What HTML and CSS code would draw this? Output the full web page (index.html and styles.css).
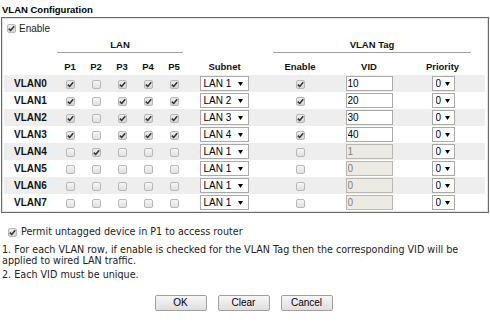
FILE: index.html
```html
<!DOCTYPE html>
<html>
<head>
<meta charset="utf-8">
<link rel="stylesheet" href="styles.css">
</head>
<body>
<div class="page">
  <div class="title">VLAN Configuration</div>
  <div class="box">
    <table class="grid">
      <colgroup>
        <col class="c-label"><col class="c-p"><col class="c-p"><col class="c-p"><col class="c-p"><col class="c-p">
        <col class="c-subnet"><col class="c-enable"><col class="c-vid"><col class="c-prio">
      </colgroup>
      <tr class="r-enable"><td colspan="10"><label class="en"><input type="checkbox" class="cb" checked><span>Enable</span></label></td></tr>
      <tr class="r-group">
        <th></th>
        <th colspan="5"><div class="grp grp-lan">LAN</div></th>
        <th></th>
        <th colspan="3"><div class="grp grp-tag">VLAN Tag</div></th>
      </tr>
      <tr class="r-head">
        <th></th><th>P1</th><th>P2</th><th>P3</th><th>P4</th><th>P5</th><th>Subnet</th><th>Enable</th><th>VID</th><th>Priority</th>
      </tr>
      <tr class="row alt">
        <th>VLAN0</th>
        <td><input type="checkbox" class="cb" checked></td><td><input type="checkbox" class="cb"></td><td><input type="checkbox" class="cb" checked></td><td><input type="checkbox" class="cb" checked></td><td><input type="checkbox" class="cb" checked></td>
        <td><select class="sel sub"><option>LAN 1</option></select></td>
        <td><input type="checkbox" class="cb" checked></td>
        <td><input type="text" class="vid" value="10"></td>
        <td><select class="sel pri"><option>0</option></select></td>
      </tr>
      <tr class="row">
        <th>VLAN1</th>
        <td><input type="checkbox" class="cb" checked></td><td><input type="checkbox" class="cb"></td><td><input type="checkbox" class="cb" checked></td><td><input type="checkbox" class="cb" checked></td><td><input type="checkbox" class="cb" checked></td>
        <td><select class="sel sub"><option>LAN 2</option></select></td>
        <td><input type="checkbox" class="cb" checked></td>
        <td><input type="text" class="vid" value="20"></td>
        <td><select class="sel pri"><option>0</option></select></td>
      </tr>
      <tr class="row alt">
        <th>VLAN2</th>
        <td><input type="checkbox" class="cb" checked></td><td><input type="checkbox" class="cb"></td><td><input type="checkbox" class="cb" checked></td><td><input type="checkbox" class="cb" checked></td><td><input type="checkbox" class="cb" checked></td>
        <td><select class="sel sub"><option>LAN 3</option></select></td>
        <td><input type="checkbox" class="cb" checked></td>
        <td><input type="text" class="vid" value="30"></td>
        <td><select class="sel pri"><option>0</option></select></td>
      </tr>
      <tr class="row">
        <th>VLAN3</th>
        <td><input type="checkbox" class="cb" checked></td><td><input type="checkbox" class="cb"></td><td><input type="checkbox" class="cb" checked></td><td><input type="checkbox" class="cb" checked></td><td><input type="checkbox" class="cb" checked></td>
        <td><select class="sel sub"><option>LAN 4</option></select></td>
        <td><input type="checkbox" class="cb" checked></td>
        <td><input type="text" class="vid" value="40"></td>
        <td><select class="sel pri"><option>0</option></select></td>
      </tr>
      <tr class="row alt">
        <th>VLAN4</th>
        <td><input type="checkbox" class="cb"></td><td><input type="checkbox" class="cb" checked></td><td><input type="checkbox" class="cb"></td><td><input type="checkbox" class="cb"></td><td><input type="checkbox" class="cb"></td>
        <td><select class="sel sub"><option>LAN 1</option></select></td>
        <td><input type="checkbox" class="cb"></td>
        <td><input type="text" class="vid" value="1" disabled></td>
        <td><select class="sel pri"><option>0</option></select></td>
      </tr>
      <tr class="row">
        <th>VLAN5</th>
        <td><input type="checkbox" class="cb"></td><td><input type="checkbox" class="cb"></td><td><input type="checkbox" class="cb"></td><td><input type="checkbox" class="cb"></td><td><input type="checkbox" class="cb"></td>
        <td><select class="sel sub"><option>LAN 1</option></select></td>
        <td><input type="checkbox" class="cb"></td>
        <td><input type="text" class="vid" value="0" disabled></td>
        <td><select class="sel pri"><option>0</option></select></td>
      </tr>
      <tr class="row alt">
        <th>VLAN6</th>
        <td><input type="checkbox" class="cb"></td><td><input type="checkbox" class="cb"></td><td><input type="checkbox" class="cb"></td><td><input type="checkbox" class="cb"></td><td><input type="checkbox" class="cb"></td>
        <td><select class="sel sub"><option>LAN 1</option></select></td>
        <td><input type="checkbox" class="cb"></td>
        <td><input type="text" class="vid" value="0" disabled></td>
        <td><select class="sel pri"><option>0</option></select></td>
      </tr>
      <tr class="row">
        <th>VLAN7</th>
        <td><input type="checkbox" class="cb"></td><td><input type="checkbox" class="cb"></td><td><input type="checkbox" class="cb"></td><td><input type="checkbox" class="cb"></td><td><input type="checkbox" class="cb"></td>
        <td><select class="sel sub"><option>LAN 1</option></select></td>
        <td><input type="checkbox" class="cb"></td>
        <td><input type="text" class="vid" value="0" disabled></td>
        <td><select class="sel pri"><option>0</option></select></td>
      </tr>
    </table>
  </div>
  <div class="notes">
    <label class="permit"><input type="checkbox" class="cb" checked><span>Permit untagged device in P1 to access router</span></label>
    <p class="note">1. For each VLAN row, if enable is checked for the VLAN Tag then the corresponding VID will be applied to wired LAN traffic.</p>
    <p class="note">2. Each VID must be unique.</p>
  </div>
  <div class="buttons">
    <button class="btn">OK</button>
    <button class="btn">Clear</button>
    <button class="btn">Cancel</button>
  </div>
</div>
</body>
</html>
```

FILE: styles.css
```css
html, body {
  margin: 0;
  padding: 0;
  background: #fff;
}
body {
  font-family: "Liberation Sans", Arial, sans-serif;
  font-size: 10px;
  color: #000;
}
.page {
  width: 490px;
  padding-top: 3px;
}
.title {
  font-weight: bold;
  font-size: 9.5px;
  line-height: 13px;
  padding-left: 2px;
  height: 14px;
}
.box {
  margin-left: 1px;
  width: 484px;
  border: 1px solid #6a6a6a;
  box-shadow: inset 0 0 0 1px #e2e2e2;
  padding: 3px 0 1px 2px;
}
.grid {
  width: 481px;
  table-layout: fixed;
  border-collapse: collapse;
  border-spacing: 0;
}
.c-label { width: 53px; }
.c-p { width: 26px; }
.c-subnet { width: 75px; }
.c-enable { width: 76px; }
.c-vid { width: 62px; }
.c-prio { width: 85px; }
.grid td, .grid th {
  padding: 0;
  text-align: center;
  vertical-align: middle;
}
.grid th {
  font-weight: bold;
  font-size: 9.5px;
  color: #111;
}
.r-enable td {
  text-align: left;
  height: 16px;
}
.en {
  display: inline-flex;
  align-items: center;
  gap: 3px;
  padding-left: 3px;
  font-size: 10px;
  color: #222;
}
.r-group th {
  height: 21px;
  vertical-align: top;
}
.grp {
  border-bottom: 1px solid #a0a0a0;
  line-height: 12px;
  padding: 2px 0 1px;
}
.grp-lan { margin: 0 4px 0 0; }
.grp-tag { margin: 0 14px 0 11px; }
.r-head th { height: 17px; }
.row { height: 17px; }
.row.alt { background: #eeeeee; }
.row th { font-size: 10px; }

.cb {
  -webkit-appearance: none;
  appearance: none;
  width: 9px;
  height: 9px;
  margin: 0;
  border: 1px solid #b8b8b8;
  border-radius: 2px;
  background: linear-gradient(#f6f6f6, #e0e0e0);
  vertical-align: middle;
  display: inline-block;
}
.cb:checked {
  background: url("data:image/svg+xml;utf8,<svg xmlns='http://www.w3.org/2000/svg' width='9' height='9' viewBox='0 0 9 9'><path d='M1.8 4.6 L3.7 6.5 L7.2 2.2' fill='none' stroke='%23333' stroke-width='1.5'/></svg>") center/9px 9px no-repeat, linear-gradient(#ececec, #d6d6d6);
}

.sel {
  -webkit-appearance: none;
  appearance: none;
  height: 15px;
  margin: 0;
  border: 1px solid #a9a9a9;
  border-radius: 0;
  background: #fff url("data:image/svg+xml;utf8,<svg xmlns='http://www.w3.org/2000/svg' width='5' height='4' viewBox='0 0 5 4'><path d='M0 0 H5 L2.5 4 Z' fill='%23000'/></svg>") no-repeat right 5px center;
  font-family: "Liberation Sans", Arial, sans-serif;
  font-size: 10px;
  color: #000;
  padding: 0 0 0 3px;
  line-height: 13px;
  vertical-align: middle;
}
.sub { width: 49px; margin-left: -1px; }
.pri {
  width: 23px;
  margin-left: 1px;
  padding-left: 3px;
  background-position: right 4px center;
}

.vid {
  width: 47px;
  height: 15px;
  box-sizing: border-box;
  margin: 0;
  border: 1px solid #a9a9a9;
  padding: 0 1px;
  font-family: "Liberation Sans", Arial, sans-serif;
  font-size: 10px;
  color: #000;
  background: #fff;
  vertical-align: middle;
}
.vid:disabled {
  background: #ebebe4;
  color: #808080;
  border-color: #b8b8b0;
}

.notes {
  font-family: "DejaVu Sans", Verdana, sans-serif;
  font-size: 9.6px;
  color: #222;
  padding: 13px 0 0 2px;
}
.permit {
  display: flex;
  align-items: center;
  gap: 4px;
  padding-left: 6px;
  line-height: 12px;
  margin-bottom: 6px;
}
.note {
  margin: 0 0 3px;
  line-height: 11px;
  width: 470px;
}
.buttons {
  display: flex;
  justify-content: center;
  gap: 11px;
  padding: 12px 0 0 0;
  margin-left: -3px;
}
.btn {
  width: 52px;
  height: 16px;
  padding: 0;
  border: 1px solid #a0a0a0;
  border-radius: 2px;
  background: linear-gradient(#f7f7f7, #dedede);
  font-family: "Liberation Sans", Arial, sans-serif;
  font-size: 10px;
  color: #000;
  line-height: 14px;
}
```
